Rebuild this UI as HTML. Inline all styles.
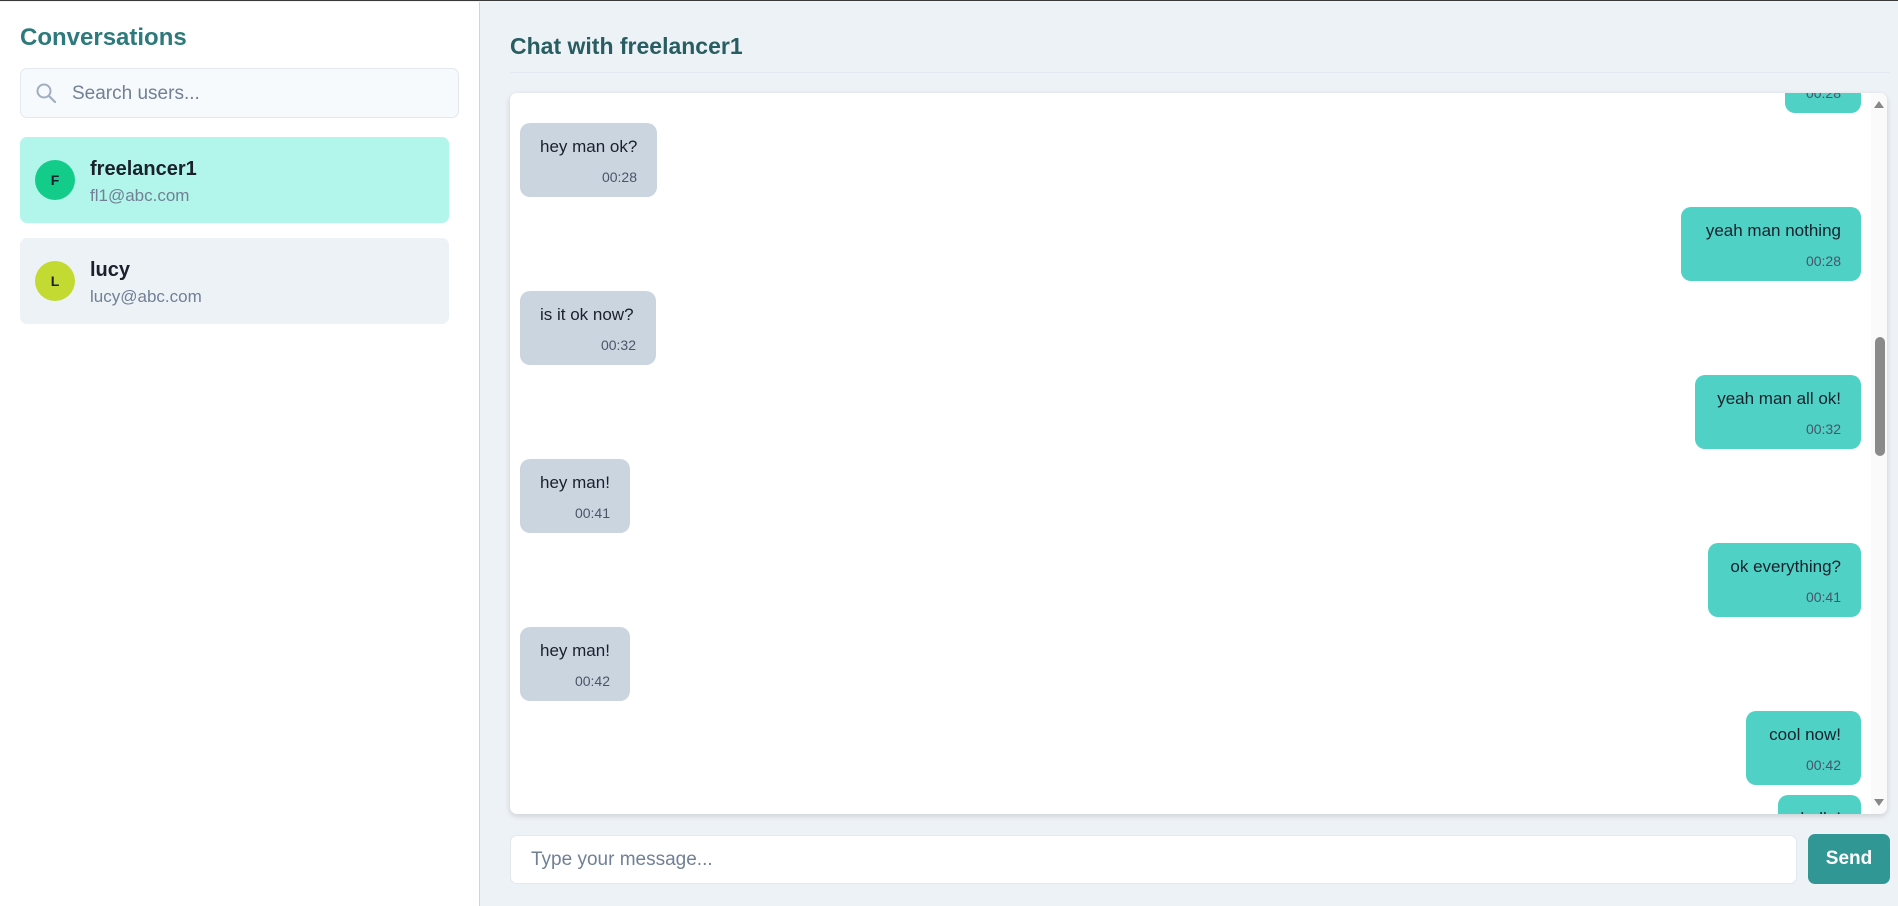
<!DOCTYPE html>
<html><head><meta charset="utf-8"><style>
*{box-sizing:border-box;margin:0;padding:0}
body{width:1898px;height:905px;overflow:hidden;font-family:"Liberation Sans",sans-serif;background:#edf2f7;position:relative;border-top:1px solid #3a3a3a}
.side{position:absolute;left:0;top:1px;width:480px;height:904px;background:#fff;border-right:1px solid #cbd5e0}
.side h2{position:absolute;left:20px;top:22px;font-size:24px;color:#2c7a7b;font-weight:bold}
.search{position:absolute;left:20px;top:66px;width:439px;height:50px;background:#f7fafc;border:1px solid #e2e8f0;border-radius:7px}
.search span{position:absolute;left:51px;top:14px;font-size:19px;color:#718096}
.item{position:absolute;left:20px;width:429px;height:86px;border-radius:7px}
.av{position:absolute;left:15px;top:23px;width:40px;height:40px;border-radius:50%;font-size:14px;font-weight:bold;text-align:center;line-height:40px;color:#1a202c}
.nm{position:absolute;left:70px;top:21px;font-size:20px;font-weight:bold;color:#1a202c}
.em{position:absolute;left:70px;top:49px;font-size:17px;color:#718096}
.hdr{position:absolute;left:510px;top:32px;font-size:23px;font-weight:bold;color:#285e61}
.hline{position:absolute;left:510px;top:71px;width:1380px;height:1px;background:#e2e8f0}
.box{position:absolute;left:510px;top:92px;width:1377px;height:721px;background:#fff;border-radius:7px;box-shadow:0 2px 6px rgba(0,0,0,.15);overflow:hidden}
.b{position:absolute;height:74px;border-radius:10px;padding:12px 20px 0 20px;text-align:right}
.b .t{font-size:17px;line-height:24px;color:#1a202c;text-align:left;white-space:nowrap}
.o .t{text-align:right}
.b .tm{font-size:14px;line-height:20px;margin-top:8px;color:#4a5568;text-align:right}
.i{left:10px;background:#cbd5e0}
.o{background:#4fd1c5}
.track{position:absolute;right:0;top:0;width:16px;height:721px;background:#fafafa}
.thumb{position:absolute;right:2px;top:244px;width:10px;height:119px;background:#8a8a8a;border-radius:5px}
.inp{position:absolute;left:510px;top:834px;width:1287px;height:49px;background:#fff;border:1px solid #e2e8f0;border-radius:7px}
.inp span{position:absolute;left:20px;top:13px;font-size:19px;color:#718096}
.send{position:absolute;left:1808px;top:833px;width:82px;height:50px;background:#319795;border-radius:7px;color:#fff;font-weight:bold;font-size:19px;text-align:center;line-height:50px}
</style></head><body>
<div class="side">
<h2>Conversations</h2>
<div class="search"><svg style="position:absolute;left:14px;top:13px" width="22" height="22" viewBox="0 0 22 22"><circle cx="9" cy="9" r="6.5" fill="none" stroke="#a0aec0" stroke-width="2"/><line x1="14" y1="14" x2="20" y2="20" stroke="#a0aec0" stroke-width="2.2" stroke-linecap="round"/></svg><span>Search users...</span></div>
<div class="item" style="top:135px;background:#b2f5ea"><div class="av" style="background:#14cc8a">F</div><div class="nm">freelancer1</div><div class="em">fl1@abc.com</div></div>
<div class="item" style="top:236px;background:#edf2f7"><div class="av" style="background:#c2da31">L</div><div class="nm">lucy</div><div class="em">lucy@abc.com</div></div>
</div>
<div class="hdr">Chat with freelancer1</div>
<div class="hline"></div>
<div class="box">
<div class="b o" style="top:-54px;left:1275px;width:76px"><div class="t">ok</div><div class="tm">00:28</div></div>
<div class="b i" style="top:30px;width:137px"><div class="t">hey man ok?</div><div class="tm">00:28</div></div>
<div class="b o" style="top:114px;left:1171px;width:180px"><div class="t">yeah man nothing</div><div class="tm">00:28</div></div>
<div class="b i" style="top:198px;width:136px"><div class="t">is it ok now?</div><div class="tm">00:32</div></div>
<div class="b o" style="top:282px;left:1185px;width:166px"><div class="t">yeah man all ok!</div><div class="tm">00:32</div></div>
<div class="b i" style="top:366px;width:110px"><div class="t">hey man!</div><div class="tm">00:41</div></div>
<div class="b o" style="top:450px;left:1198px;width:153px"><div class="t">ok everything?</div><div class="tm">00:41</div></div>
<div class="b i" style="top:534px;width:110px"><div class="t">hey man!</div><div class="tm">00:42</div></div>
<div class="b o" style="top:618px;left:1236px;width:115px"><div class="t">cool now!</div><div class="tm">00:42</div></div>
<div class="b o" style="top:702px;left:1268px;width:83px"><div class="t">hello!</div><div class="tm">00:42</div></div>
<div class="track"><svg style="position:absolute;left:3px;top:8px" width="10" height="8"><polygon points="5,0 10,7 0,7" fill="#888"/></svg><div class="thumb"></div><svg style="position:absolute;left:3px;top:706px" width="10" height="8"><polygon points="0,0 10,0 5,7" fill="#888"/></svg></div>
</div>
<div class="inp"><span>Type your message...</span></div>
<div class="send">Send</div>
</body></html>
